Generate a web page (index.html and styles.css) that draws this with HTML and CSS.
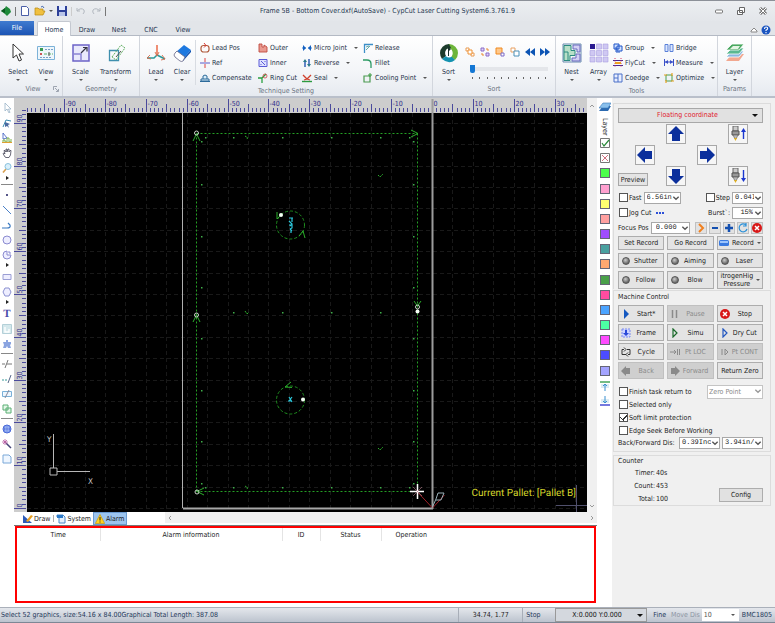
FILE: index.html
```html
<!DOCTYPE html>
<html lang="en">
<head>
<meta charset="utf-8">
<title>CypCut Laser Cutting System</title>
<link rel="stylesheet" href="styles.css">
</head>
<body>
<header class="titlebar">
  <div class="quick">
    <svg class="i12" viewBox="0 0 12 12"><path d="M1 6l4-3 1-2 4 3 1 3-4 4-2-2z" fill="#1f8a3b"/><path d="M1 6l4-3v5z" fill="#0c5a22"/></svg>
    <i class="vbar"></i>
    <button aria-label="New"><svg class="i12" viewBox="0 0 12 12"><path d="M2.500 1.500h5l2 2v7h-7z" fill="#fff" stroke="#4a5fa8"/></svg></button>
    <button aria-label="Open"><svg class="i12" viewBox="0 0 12 12"><path d="M1 10V3h3l1 1h4v2h2l-2 4z" fill="#f0c040" stroke="#b8860b" stroke-width=".7"/><path d="M7 2q2-2 3 1" fill="none" stroke="#46a"/></svg></button>
    <b class="dn"></b>
    <button aria-label="Save"><svg class="i12" viewBox="0 0 12 12"><path d="M1 1h10v10H1z" fill="#2c3f98"/><path d="M3 1h6v4H3z" fill="#e4ecff"/><path d="M3 7h6v4H3z" fill="#b8c4e8"/></svg></button>
    <i class="vbar pale"></i>
    <button aria-label="Undo"><svg class="i12" viewBox="0 0 12 12"><path d="M2 3v3h3M2 6q4-4 7-1 1 2-1 4" fill="none" stroke="#b3b8c0"/></svg></button>
    <button aria-label="Redo"><svg class="i12" viewBox="0 0 12 12"><path d="M10 3v3H7M10 6Q6 2 3 5q-1 2 1 4" fill="none" stroke="#b3b8c0"/></svg></button>
    <i class="vbar"></i>
  </div>
  <h1>Frame 5B - Bottom Cover.dxf(AutoSave) - CypCut Laser Cutting System6.3.761.9</h1>
  <div class="winbtns">
    <button aria-label="Minimize"><svg class="i12" viewBox="0 0 12 12"><rect x="2.500" y="5" width="7" height="3" rx="1" fill="#fff" stroke="#777"/></svg></button>
    <button aria-label="Restore"><svg class="i12" viewBox="0 0 12 12"><path d="M4.500 2.500h5v5h-5zM2.500 5.500h5v4h-5z" fill="#fff" stroke="#666"/></svg></button>
    <button aria-label="Close"><svg class="i12" viewBox="0 0 12 12"><path d="M3 3l6 6M9 3l-6 6" stroke="#777" stroke-width="3"/><path d="M3 3l6 6M9 3l-6 6" stroke="#fff"/></svg></button>
  </div>
</header>
<nav class="tabs">
  <button class="file">File</button>
  <button class="on">Home</button>
  <button>Draw</button>
  <button>Nest</button>
  <button>CNC</button>
  <button>View</button>
  <span class="grow"></span>
  <button class="mini" aria-label="Collapse ribbon"><svg class="i10" viewBox="0 0 10 10"><path d="M2 6l3-3 3 3v1H2z" fill="#fff" stroke="#888"/></svg></button>
  <button class="mini" aria-label="Help"><svg class="i10" viewBox="0 0 10 10"><circle cx="5" cy="5" r="4.500" fill="#1b55c0"/><path d="M3.500 4q0-2 1.500-2 1.700 0 1.700 1.300Q6.700 4.500 5 5.200V6M5 7v1.200" fill="none" stroke="#fff" stroke-width="1.100"/></svg></button>
</nav>

<section class="ribbon" aria-label="Home">
  <div class="grp g-view">
    <div class="body">
      <button class="big"><svg class="i20" viewBox="0 0 20 20"><path d="M5 1v14l3.500-3 2.500 6 2.500-1-2.500-6h4.500z" fill="#fff" stroke="#333"/></svg>Select<b class="dn"></b></button>
      <button class="big"><svg class="i20" viewBox="0 0 20 20"><path d="M1.500 3.500h17v13h-17z" fill="#eef6fb" stroke="#7cb2d8"/><path d="M4 5h3v3H4z" fill="#3a9a50"/><path d="M4 10h2v2H4z" fill="#c55"/><path d="M9 6.500h8M4 14.500h12" stroke="#7aa0c8" stroke-dasharray="2 1"/><path d="M8 11h9" stroke="#5ab06a" stroke-dasharray="3 1"/><path d="M13 9v4" stroke="#555"/></svg>View<b class="dn"></b></button>
    </div>
    <h2>View<svg class="corner" viewBox="0 0 6 6"><path d="M.5 4V.5H4M2 2l3 3M5.500 3v2.500H3" fill="none" stroke="#8a92a0" stroke-width=".8"/></svg></h2>
  </div>
  <div class="grp g-geo">
    <div class="body">
      <button class="big"><svg class="i20" viewBox="0 0 20 20"><path d="M2 2h16v16H2z" fill="#e9e9fb" stroke="#6c63c8" stroke-width="1.500"/><path d="M2 11h8v7" fill="none" stroke="#8b84d4" stroke-width="1.500"/><path d="M10 10l5-5M12 4.500h4v4" fill="none" stroke="#334" stroke-width="1.200"/></svg>Scale<b class="dn"></b></button>
      <button class="big"><svg class="i20" viewBox="0 0 20 20"><path d="M3.500 7.500h9v10h-9z" fill="none" stroke="#3f8fae" stroke-width="1.300"/><path d="M6 14l9-12 4 3-9 12z" fill="none" stroke="#5fae60" stroke-dasharray="2 1"/><path d="M10 14l5-6" stroke="#555"/></svg>Transform<b class="dn"></b></button>
    </div>
    <h2>Geometry</h2>
  </div>
  <div class="grp g-tech">
    <div class="body">
      <div class="leads">
      <button class="big"><svg class="i20" viewBox="0 0 20 20"><path d="M11 2v10" stroke="#e8542c" stroke-width="1.300"/><path d="M11 12l-3 3H1M11 12l8 4" fill="none" stroke="#2b9a9a" stroke-width="1.500"/><path d="M9 9l2 4 2-4M4 12l-3 3 4 1M16 12l3 4-4 1" fill="none" stroke="#d86a48" stroke-width=".9"/></svg>Lead<b class="dn"></b></button>
      <button class="big"><svg class="i20" viewBox="0 0 20 20"><path d="M12 2l7 5-8 9-8-6z" fill="#1d79e0"/><path d="M19 7v2l-8 9v-2z" fill="#0d50b0"/><path d="M5 8l8 6-2 4q-1 1-3 0l-5-4q-2-2 0-4z" fill="#fff" stroke="#668" stroke-width=".8"/></svg>Clear<b class="dn"></b></button>
      </div>
      <div class="cols c-tech">
        <button><svg class="i10" viewBox="0 0 10 10"><rect x="1" y="2.500" width="8" height="6.500" rx="2.500" fill="none" stroke="#b05a3c" stroke-width="1.200"/><path d="M4 0l2 2.500-2 2" fill="none" stroke="#d33"/></svg>Lead Pos</button>
        <button><svg class="i10" viewBox="0 0 10 10"><path d="M1 1h3v3h2V2l3 2v5H1z" fill="#e99a90" stroke="#c04a40" stroke-width=".9"/></svg>Outer</button>
        <button><svg class="i10" viewBox="0 0 10 10"><path d="M0 5h10" stroke="#2a7fd4" stroke-dasharray="4 2"/><path d="M1 2l3 3-3 3zM9 2L6 5l3 3z" fill="#1560c0"/></svg>Micro Joint<b class="dn far"></b></button>
        <button><svg class="i10" viewBox="0 0 10 10"><path d="M1.500 10V1.500H10" fill="none" stroke="#3c8fc8" stroke-width="1.300"/><path d="M3 7l4-4M3 4l3-1" stroke="#6aa" /></svg>Release</button>
        <button><svg class="i10" viewBox="0 0 10 10"><path d="M0 5h10" stroke="#5a5ac8"/><path d="M5 0v10" stroke="#d44" stroke-dasharray="4 2"/></svg>Ref</button>
        <button><svg class="i10" viewBox="0 0 10 10"><path d="M1 1.500h8v7H1z" fill="#dfe2ff" stroke="#5a5ad8"/><path d="M3 3l4 4M7 3v1M3 6v1" stroke="#5a5ad8"/></svg>Inner</button>
        <button><svg class="i10" viewBox="0 0 10 10"><path d="M3 9V3M7 1v6" stroke="#2456b0" stroke-width="1.400"/><path d="M1 4l2-3 2 3zM5 6l2 3 2-3z" fill="#2a7a8a"/></svg>Reverse<b class="dn far"></b></button>
        <button><svg class="i10" viewBox="0 0 10 10"><path d="M0 2h4q4 0 4 4v4" fill="none" stroke="#2c9a64" stroke-width="1.300"/></svg>Fillet</button>
        <button><svg class="i10" viewBox="0 0 10 10"><path d="M0 8.500h10M1 6h2V3q2-2 4 0v3h2v2H1zM3 6h4" fill="#d8ecf8" stroke="#2c6a9a"/></svg>Compensate</button>
        <button><svg class="i10" viewBox="0 0 10 10"><path d="M0 5h4v5M4 5l4-4" fill="none" stroke="#2aa040" stroke-width="1.300"/><circle cx="7" cy="3" r="2" fill="none" stroke="#c44" stroke-width=".8"/></svg>Ring Cut</button>
        <button><svg class="i10" viewBox="0 0 10 10"><path d="M0 8.500h10" stroke="#2a9a40" stroke-width="1.400"/><path d="M1 2l4 4 4-4M5 6l-3 1M5 6l3 1" fill="none" stroke="#d0402c" stroke-width="1.300"/></svg>Seal<b class="dn far"></b></button>
        <button><svg class="i10" viewBox="0 0 10 10"><path d="M1 3h6v6H1z" fill="none" stroke="#4a9a50" stroke-width="1.200"/><path d="M7 0v4M5 2h4" stroke="#3a9a40"/></svg>Cooling Point<b class="dn far"></b></button>
      </div>
    </div>
    <h2>Technique Setting</h2>
  </div>
  <div class="grp g-sort">
    <div class="body">
      <button class="big"><svg class="i20" viewBox="0 0 20 20"><path d="M10 1a9 9 0 0 1 9 9q0 4-3 7l-4-3q3-4 0-7l-2 2V1z" fill="#6db53a"/><path d="M10 1A9 9 0 0 0 1 10q0 3 2 6l4-3q-2-4 1-7l4-1z" fill="#1c3c2c"/><path d="M3 16q7 6 13 1l-4-4q-2 2-5 0z" fill="#1492b0"/><ellipse cx="10" cy="10" rx="3.500" ry="4.500" fill="#fff"/><path d="M9 4l3 2-2 2v5H9z" fill="#16302a"/></svg>Sort<b class="dn"></b></button>
      <div class="sorter">
        <div class="sorticons">
          <button aria-label="Order 1"><svg class="i10" viewBox="0 0 10 10"><path d="M1 1h3v3H1zM6 6h3v3H6z" fill="#fff" stroke="#e89a50"/><path d="M3 3h4v4H3z" fill="#fff" stroke="#f09030"/></svg></button>
          <button aria-label="Order 2"><svg class="i10" viewBox="0 0 10 10"><path d="M1 1h3v3H1zM6 6h3v3H6z" fill="#ded4f8" stroke="#8a6ac8"/><path d="M6 2h2v2M4 8H2V6" fill="none" stroke="#e88a30"/></svg></button>
          <button aria-label="Order 3"><svg class="i10" viewBox="0 0 10 10"><path d="M1 1h6v6H1z" fill="#ffc88a" stroke="#f08a20"/><path d="M6 6h3v3H6z" fill="#fff" stroke="#7a6ac8"/></svg></button>
          <button aria-label="Order 4"><svg class="i10" viewBox="0 0 10 10"><path d="M1 1h4v4H1z" fill="#fff" stroke="#e8a060"/><path d="M4 4h5v5H4z" fill="#fff" stroke="#4a90b8"/></svg></button>
          <button aria-label="Previous"><svg class="i10" viewBox="0 0 10 10"><path d="M5 1v8L0 5zM10 1v8L5 5z" fill="#0c54b4"/></svg></button>
          <button aria-label="Next"><svg class="i10" viewBox="0 0 10 10"><path d="M0 1v8l5-4zM5 1v8l5-4z" fill="#0c54b4"/></svg></button>
        </div>
        <input type="range" min="0" max="10" value="0" aria-label="Sort position">
        <div class="ticks"><i></i><i></i><i></i><i></i><i></i><i></i><i></i><i></i><i></i><i></i><i></i></div>
      </div>
    </div>
    <h2>Sort</h2>
  </div>
  <div class="grp g-tools">
    <div class="body">
      <button class="big"><svg class="i20" viewBox="0 0 20 20"><path d="M1 1h18v18H1z" fill="#eef8f4" stroke="#6a8ab0"/><path d="M2 2.500h7v5h4v5H8v5H2z" fill="#b9e0c8" stroke="#2a8a80"/><path d="M2 9h4v8" fill="none" stroke="#2a8a80"/><path d="M11 2h7v7h-3V6h-4zM10 15h4v-4h4v7h-8z" fill="#d4d0f4" stroke="#6a6ac0"/></svg>Nest<b class="dn"></b></button>
      <button class="big"><svg class="i20" viewBox="0 0 20 20"><path d="M1 1h5v5H1z" fill="#2a1a90"/><path d="M7.500 1h5v5h-5zM14 1h5v5h-5zM1 7.500h5v5H1zM7.500 7.500h5v5h-5zM14 7.500h5v5h-5zM1 14h5v5H1zM7.500 14h5v5h-5zM14 14h5v5h-5z" fill="#cfc8f2" stroke="#aaa0e0" stroke-width=".6"/></svg>Array<b class="dn"></b></button>
      <div class="cols c-tools">
        <button><svg class="i10" viewBox="0 0 10 10"><path d="M1 1h5v5H1zM4 3h5v5H4z" fill="#cfe0ff" stroke="#1f54c8"/><path d="M3 4v5h4" fill="none" stroke="#1f54c8"/></svg>Group<b class="dn far"></b></button>
        <button><svg class="i10" viewBox="0 0 10 10"><path d="M1 1.500h3v7H1zM6 1.500h3v7H6z" fill="#dce8ff" stroke="#5a80d8"/></svg>Bridge</button>
        <button><svg class="i10" viewBox="0 0 10 10"><path d="M0 2.500h10M0 7.500h10" stroke="#4a2a90" stroke-width="1.200"/><path d="M2 0v10M8 0v10" stroke="#d03a6a" stroke-dasharray="1 1.500"/><path d="M2 5h6" stroke="#f0a020" stroke-width="2"/></svg>FlyCut<b class="dn far"></b></button>
        <button><svg class="i10" viewBox="0 0 10 10"><path d="M.5 1v7M9.500 1v7M1 4h8" stroke="#3a50c8"/><path d="M1 4l3-2v4zM9 4L6 2v4z" fill="#3a50c8"/></svg>Measure<b class="dn far"></b></button>
        <button><svg class="i10" viewBox="0 0 10 10"><path d="M1 1h8v8H1z" fill="#e8eeff" stroke="#4a70c8"/><path d="M5 1v8M1 5h4" stroke="#4a70c8"/></svg>Coedge<b class="dn far"></b></button>
        <button><svg class="i10" viewBox="0 0 10 10"><path d="M2 2h6v6H2z" fill="none" stroke="#4aa050"/><path d="M0 2h3M8 0v3M7 8h3M2 7v3" stroke="#e8a020" stroke-width="1.200"/></svg>Optimize<b class="dn far"></b></button>
      </div>
    </div>
    <h2>Tools</h2>
  </div>
  <div class="grp g-params">
    <div class="body">
      <button class="big"><svg class="i20" viewBox="0 0 20 20"><path d="M7 11h12l-5 7H1z" fill="#f2a890"/><path d="M7 8h12l-5 6H1z" fill="#8ab8e0" stroke="#fff" stroke-width=".8"/><path d="M7 5h12l-5 6H1z" fill="#5ab890" stroke="#fff" stroke-width=".8"/><path d="M7 1h12l-5 6H1z" fill="#4aa860" stroke="#fff" stroke-width=".8"/><path d="M8 3h7l-2 3H5z" fill="#e4f4e4"/></svg>Layer<b class="dn"></b></button>
    </div>
    <h2>Params</h2>
  </div>
</section>

<main class="work">
  <div class="tools" role="toolbar" aria-label="Drawing tools">
    <button aria-label="Select"><svg class="i10" viewBox="0 0 10 10"><path d="M3 0v8l2-2 2 4 1-.5L6.500 6H9z" fill="#fff" stroke="#9ab4c8" stroke-width=".8"/></svg></button>
    <button aria-label="Edit nodes"><svg class="i10" viewBox="0 0 10 10"><path d="M1 9l3-7 5 1" fill="none" stroke="#3a8ab0"/><path d="M3 4l5 2-2 1 1 3-2-2-2 1z" fill="#4a6aa0"/></svg></button>
    <button aria-label="Scale nodes"><svg class="i10" viewBox="0 0 10 10"><path d="M1 0v6l4-1z" fill="#fff" stroke="#3a5ac0" stroke-width=".8"/><path d="M1 9V7h2v2h2V5h2v4h2V6" fill="none" stroke="#7ab04a"/><path d="M0 9.500h10" stroke="#e0a030"/></svg></button>
    <button aria-label="Pan"><svg class="i10" viewBox="0 0 10 10"><path d="M3 9L1 5.500 2 5l1 1L2 2.500h1L4 4V1h1v3l1-3h1v3l1-1.500h1L8.500 7 7 9.500H4z" fill="#fff" stroke="#445" stroke-width=".8"/></svg></button>
    <button aria-label="Zoom"><svg class="i10" viewBox="0 0 10 10"><path d="M4 6L1 9.500" stroke="#d8a050" stroke-width="1.600"/><circle cx="6" cy="3.500" r="3" fill="#d8f0fc" stroke="#8ac0dc"/></svg></button>
    <span class="more"></span>
    <hr>
    <button aria-label="Point"><svg class="i10" viewBox="0 0 10 10"><path d="M4 4h2v2H4z" fill="#558"/></svg></button>
    <button aria-label="Line"><svg class="i10" viewBox="0 0 10 10"><path d="M1 1l8 8" stroke="#4a80c8"/></svg></button>
    <button aria-label="Polyline"><svg class="i10" viewBox="0 0 10 10"><path d="M0 8h5q4 0 3-3L6 3" fill="none" stroke="#3a78c0" stroke-width="1.200"/></svg></button>
    <button aria-label="Circle"><svg class="i10" viewBox="0 0 10 10"><circle cx="5" cy="5" r="4" fill="#eef" stroke="#8a8ad0"/></svg></button>
    <button aria-label="Arc"><svg class="i10" viewBox="0 0 10 10"><path d="M5 5V1a4 4 0 1 0 4 4zM7 1v2h2" fill="#eef" stroke="#8a8ad0"/></svg></button>
    <span class="more"></span>
    <button aria-label="Rectangle"><svg class="i10" viewBox="0 0 10 10"><path d="M1 2.500h8v5H1z" fill="#eef" stroke="#9a9ed4"/></svg></button>
    <button aria-label="Polygon"><svg class="i10" viewBox="0 0 10 10"><path d="M3 1h4l2 4-2 4H3L1 5z" fill="#eef" stroke="#8a90d0"/></svg></button>
    <span class="more"></span>
    <button class="t">T</button>
    <button aria-label="Image"><svg class="i10" viewBox="0 0 10 10"><path d="M.5.5h9v9h-9z" fill="#d4e8ec" stroke="#b4d0d8"/><path d="M3 3v5h4V5" fill="none" stroke="#fff" stroke-width="1.400"/></svg></button>
    <button aria-label="Parts"><svg class="i10" viewBox="0 0 10 10"><path d="M4 1h2v2l3 0v2L8 6l1 3H6L5 7 4 9H1l1-3-1-3h3z" fill="#8aa4e0"/></svg></button>
    <hr>
    <button aria-label="Break"><svg class="i10" viewBox="0 0 10 10"><path d="M0 5h3M5 5h5M3 9l3-8" stroke="#777"/></svg></button>
    <button aria-label="Extend"><svg class="i10" viewBox="0 0 10 10"><path d="M0 6h6" stroke="#3a9a9a" stroke-dasharray="2 1"/><path d="M6 9l3-8" stroke="#568"/></svg></button>
    <button aria-label="Trim"><svg class="i10" viewBox="0 0 10 10"><path d="M.5 2.500h9v5h-9z" fill="#eef6ff" stroke="#7ab0d8"/><path d="M3 9l4-8" stroke="#889"/></svg></button>
    <button aria-label="Combine"><svg class="i10" viewBox="0 0 10 10"><path d="M1 1h5v5H1zM4 4h5v5H4z" fill="#e4f8e8" stroke="#5aae74"/></svg></button>
    <hr>
    <button aria-label="Sphere"><svg class="i10" viewBox="0 0 10 10"><circle cx="5" cy="5" r="4" fill="#a8c0f8" stroke="#4a6ad8"/><path d="M1 5h8M5 1v8M3 2q-1 3 0 6M7 2q1 3 0 6" fill="none" stroke="#4a6ad8" stroke-width=".7"/></svg></button>
    <button aria-label="Magic"><svg class="i10" viewBox="0 0 10 10"><path d="M4 4l5 5" stroke="#447" stroke-width="1.500"/><path d="M3 0v6M0 3h6M1 1l4 4M5 1L1 5" stroke="#b04a9a" stroke-width=".7"/></svg></button>
    <button aria-label="Sheet"><svg class="i10" viewBox="0 0 10 10"><path d="M1 1h6l2 2v6H1z" fill="#eef6ff" stroke="#7aa8d8"/></svg></button>
  </div>

  <div class="center">
    <div class="stage">
      <div class="canvas">
        <svg class="drawing" role="img" aria-label="Nested part drawing">
          <g id="scene" transform="translate(-14 -98)"></g>
          <g transform="translate(-14 -98)" fill="none">
            <path d="M182.500 113v395" stroke="#b0b0b0"/>
            <path d="M183 508.500h250" stroke="#a8a8a8" stroke-width="2"/>
            <path d="M432.500 99v410" stroke="#9c9c9c" stroke-width="2"/>
            <path d="M196.500 133.500V491.500" class="cut"/><path d="M196.500 133.500H417.500" class="cut"/><path d="M417.500 133.500V491.500" class="cut"/><path d="M196.500 491.500H417.500" class="cut"/>
            <circle cx="290.500" cy="225" r="14" class="round"/><circle cx="290.500" cy="400" r="14" class="round"/>
            <g stroke="#2cae2c"><path d="M193 141l3.500-7 3.500 7M193 322l3.500-7 3.500 7M411 130l7 3.500-7 3.500M204 488l-7 3.500 7 3.500M414 301l3.500 5 3.500-5M299 236l4-5 2 7M277 212v7l4-4M291 382l-6 5 7 .5"/>
            <path d="M245 136l3 2-2 1M245 311l2 3 2-2M245 486l3 2-2 1M378 175l2 2 3-3M378 448l2 2 3-3" stroke-dasharray="2 1"/></g>
            <g stroke="#c8d8c8"><circle cx="196.500" cy="133" r="2"/><circle cx="196.500" cy="315" r="2"/><circle cx="197" cy="492" r="2"/><circle cx="417.500" cy="307" r="2"/></g>
            <g fill="#f4fff4"><circle cx="281" cy="215" r="2"/><circle cx="303" cy="399.500" r="2"/><circle cx="417.500" cy="311.500" r="2"/></g>
            <path d="M289 218h4M292 218v4M289 221l3 3-2 2M289 225h3v3l-2 1M291 230v3M290 229l2 2M289 397l3 5M292 397l-3 4M288 401h4" stroke="#2cc8dc" stroke-width="1.200"/>
            <path d="M417.500 492l15 16 12-13" stroke="#a02028"/>
            <path d="M432 508l4-9M436 499l2-6h6l-3 7h-5" stroke="#9ab0b8"/>
            <path d="M410 491.500h14M417.500 484v15" stroke="#fff" stroke-width="1.500"/>
            <path d="M413 487l9 9M422 487l-9 9" stroke="#c08090" stroke-width=".6"/>
            <path d="M53.500 434v34M57 471.500h33M50 468h7v7h-7z" stroke="#b8b8b8"/>
            <path d="M576.500 485v27M556 505.500h31" stroke="#50506c"/>
            <g fill="#c8c8c8" class="axis"><text x="47" y="442">Y</text><text x="88" y="484">X</text></g>
          </g>
        </svg>
        <p class="pallet">Current Pallet: [Pallet B]</p>
      </div>
      <div class="vscroll"><svg class="i6" viewBox="0 0 6 6"><path d="M1 4l2-2 2 2" fill="none" stroke="#999"/></svg><svg class="i6" viewBox="0 0 6 6"><path d="M1 2l2 2 2-2" fill="none" stroke="#999"/></svg></div>
    </div>
    <div class="dock">
      <button><svg class="i10" viewBox="0 0 10 10"><path d="M0 1v8h9z" fill="#2c5ab8"/><path d="M3 7l5-6 2 1-5 6z" fill="#e8a020"/></svg>Draw</button><i></i>
      <button><svg class="i10" viewBox="0 0 10 10"><path d="M1 1h6l2 2v6H3V3H1z" fill="#e4f0fc" stroke="#4a88c8"/><path d="M1 1h6v3H1z" fill="#2c7ac8"/></svg>System</button>
      <button class="on"><svg class="i10" viewBox="0 0 10 10"><path d="M5 .5L9.700 9.500H.3z" fill="#ffd21c" stroke="#c89a10" stroke-width=".7"/><path d="M5 3v3.500M5 7.500v1" stroke="#222"/></svg>Alarm</button>
      <div class="hscroll"><svg class="i6" viewBox="0 0 6 6"><path d="M4 1L2 3l2 2" fill="none" stroke="#999"/></svg><svg class="i6" viewBox="0 0 6 6"><path d="M2 1l2 2-2 2" fill="none" stroke="#999"/></svg></div>
    </div>
    <div class="alarms">
      <table>
        <thead><tr><th class="w1">Time</th><th class="w2">Alarm information</th><th class="w3">ID</th><th class="w4">Status</th><th class="w5">Operation</th><th></th></tr></thead>
      </table>
    </div>
  </div>

  <aside class="layers" aria-label="Layers">
    <svg class="i12" viewBox="0 0 12 12"><path d="M4 5h8l-3 5H0z" fill="#2c6ab0"/><path d="M4 2h8L9 7H0z" fill="#8ac0ec" stroke="#3a7ab8" stroke-width=".6"/></svg>
    <span class="vtext">Layer</span>
    <div class="swatches">
      <svg class="i10" viewBox="0 0 10 10"><path d="M.5.5h9v9h-9z" fill="#fff" stroke="#777"/><path d="M2 5l2 3 5-6" fill="none" stroke="#2a8a3a" stroke-width="1.200"/></svg>
      <svg class="i10" viewBox="0 0 10 10"><path d="M.5.5h9v9h-9z" fill="#fff" stroke="#777"/><path d="M2 2l6 6M8 2L2 8" stroke="#d07080"/></svg>
      <button class="s1" aria-label="Layer 1"></button><button class="s2" aria-label="Layer 2"></button><button class="s3" aria-label="Layer 3"></button><button class="s4" aria-label="Layer 4"></button><button class="s5" aria-label="Layer 5"></button><button class="s6" aria-label="Layer 6"></button><button class="s7" aria-label="Layer 7"></button><button class="s8" aria-label="Layer 8"></button><button class="s9" aria-label="Layer 9"></button><button class="s10" aria-label="Layer 10"></button><button class="s11" aria-label="Layer 11"></button><button class="s12" aria-label="Layer 12"></button><button class="s13" aria-label="Layer 13"></button><button class="s14" aria-label="Layer 14"></button>
      <svg class="i10" viewBox="0 0 10 10"><path d="M0 1h10" stroke="#3aa050" stroke-width="1.400"/><path d="M1 4h8M1 6h8" stroke="#b8d8e8"/><path d="M5 10V3M3 5l2-2 2 2" fill="none" stroke="#3a90d0"/></svg>
      <svg class="i10" viewBox="0 0 10 10"><path d="M0 9h10" stroke="#3a40d0" stroke-width="1.400"/><path d="M1 4h8M1 6h8" stroke="#b8d8e8"/><path d="M5 0v7M3 5l2 2 2-2" fill="none" stroke="#3a90d0"/></svg>
    </div>
  </aside>

  <aside class="panel" aria-label="Machine">
    <div class="box first">
      <div class="pick coord"><select aria-label="Coordinate"><option>Floating coordinate</option></select><b class="dn"></b></div>
      <div class="pad">
        <button class="up" aria-label="Up"><svg class="i16" viewBox="0 0 16 16"><path d="M8 0l8 8h-4v7H4V8H0z" fill="#0b2f9c"/></svg></button>
        <button class="nozup" aria-label="Nozzle up"><svg class="i16" viewBox="0 0 16 16"><path d="M3 0h5v5H3z" fill="#ccc" stroke="#666"/><path d="M2 5h7v4H2z" fill="#999" stroke="#555"/><path d="M3 9h5l-2 4H5z" fill="#bbb" stroke="#666" stroke-width=".7"/><path d="M4 12h3l-1.500 3z" fill="#e0b020"/><path d="M13.500 13V4" stroke="#1c38d0" stroke-width="1.400"/><path d="M11 6l2.500-4L16 6z" fill="#1c38d0"/></svg></button>
        <button class="left" aria-label="Left"><svg class="i16" viewBox="0 0 16 16"><path d="M0 8l8-8v4h7v8H8v4z" fill="#0b2f9c"/></svg></button>
        <button class="right" aria-label="Right"><svg class="i16" viewBox="0 0 16 16"><path d="M16 8L8 0v4H1v8h7v4z" fill="#0b2f9c"/></svg></button>
        <button class="preview">Preview</button>
        <button class="down" aria-label="Down"><svg class="i16" viewBox="0 0 16 16"><path d="M8 16l8-8h-4V1H4v7H0z" fill="#0b2f9c"/></svg></button>
        <button class="nozdn" aria-label="Nozzle down"><svg class="i16" viewBox="0 0 16 16"><path d="M3 0h5v5H3z" fill="#ccc" stroke="#666"/><path d="M2 5h7v4H2z" fill="#999" stroke="#555"/><path d="M3 9h5l-2 4H5z" fill="#bbb" stroke="#666" stroke-width=".7"/><path d="M4 12h3l-1.500 3z" fill="#e0b020"/><path d="M13.500 2v9" stroke="#1c38d0" stroke-width="1.400"/><path d="M11 10l2.500 4L16 10z" fill="#1c38d0"/></svg></button>
      </div>
      <div class="row">
        <label><input type="checkbox">Fast</label>
        <div class="pick w-fast"><select aria-label="Fast speed"><option>6.56in/</option></select><svg class="i6" viewBox="0 0 6 6"><path d="M1 2l2 2 2-2" fill="none" stroke="#555"/></svg></div>
        <span class="grow"></span>
        <label><input type="checkbox">Step</label>
        <div class="pick w-step"><select aria-label="Step length"><option>0.04I:</option></select><svg class="i6" viewBox="0 0 6 6"><path d="M1 2l2 2 2-2" fill="none" stroke="#555"/></svg></div>
      </div>
      <div class="row">
        <label><input type="checkbox">Jog Cut</label><button class="dots" aria-label="Jog cut settings"><svg class="i10" viewBox="0 0 10 10"><path d="M1 4h2v2H1zM4 4h2v2H4zM7 4h2v2H7z" fill="#2c50d8"/></svg></button>
        <span class="grow"></span>
        <label for="burst">Burst`:</label>
        <div class="pick w-burst"><select id="burst"><option>15%</option></select><svg class="i6" viewBox="0 0 6 6"><path d="M1 2l2 2 2-2" fill="none" stroke="#555"/></svg></div>
      </div>
      <div class="row focus">
        <label for="focus">Focus Pos</label>
        <div class="pick w-focus"><select id="focus"><option>0.000</option></select><svg class="i6" viewBox="0 0 6 6"><path d="M1 2l2 2 2-2" fill="none" stroke="#555"/></svg></div>
        <span class="grow"></span>
        <button class="sq" aria-label="Go"><svg class="i10" viewBox="0 0 10 10"><path d="M3 1l4 4-4 4" fill="none" stroke="#f08020" stroke-width="2"/></svg></button>
        <button class="sq" aria-label="Decrease"><svg class="i10" viewBox="0 0 10 10"><path d="M2 5h6" stroke="#1450b0" stroke-width="2"/></svg></button>
        <button class="sq" aria-label="Increase"><svg class="i10" viewBox="0 0 10 10"><path d="M1 5h8M5 1v8" stroke="#1450b0" stroke-width="2.500"/></svg></button>
        <button class="sq" aria-label="Refresh"><svg class="i10" viewBox="0 0 10 10"><path d="M8 2a4 4 0 1 0 1 4M8 0v3H5" fill="none" stroke="#2a90d8" stroke-width="1.200"/></svg></button>
        <button class="sq" aria-label="Cancel"><svg class="i10" viewBox="0 0 10 10"><circle cx="5" cy="5" r="5" fill="#d81818"/><path d="M3 3l4 4M7 3L3 7" stroke="#fff" stroke-width="1.500"/></svg></button>
      </div>
      <div class="btns b1">
        <button>Set Record</button><button>Go Record</button><button class="rec"><svg class="i10" viewBox="0 0 10 10"><rect y="2" width="10" height="6" rx="1.500" fill="#3a7ae0"/><path d="M1 3h8v2H1z" fill="#9cc4fc"/></svg>Record<b class="dn"></b></button>
        <button><i class="led"></i><span>Shutter</span></button><button><i class="led"></i><span>Aiming</span></button><button><i class="led"></i><span>Laser</span></button>
        <button><i class="led"></i><span>Follow</span></button><button><i class="led"></i><span>Blow</span></button><button class="gas"><span>itrogenHig<br>Pressure</span><b class="dn"></b></button>
      </div>
    </div>
    <div class="box">
      <h3>Machine Control</h3>
      <div class="btns b2">
        <button><svg class="i10" viewBox="0 0 10 10"><path d="M3 0l5 5-5 5z" fill="#1458c0"/></svg><span>Start*</span></button>
        <button disabled><svg class="i10" viewBox="0 0 10 10"><path d="M2.500 1v8M6.500 1v8" stroke="#8a8a8a" stroke-width="1.500"/></svg><span>Pause</span></button>
        <button><svg class="i10" viewBox="0 0 10 10"><circle cx="5" cy="5" r="5" fill="#d81818"/><path d="M3 3l4 4M7 3L3 7" stroke="#fff" stroke-width="1.500"/></svg><span>Stop</span></button>
        <button><svg class="i10" viewBox="0 0 10 10"><path d="M1 1h8v8H1z" fill="#cdd4ff" stroke="#7a8af0" stroke-dasharray="2 1"/><path d="M4 2v3H2l3 3 3-3H6V2z" fill="#2a48d8"/></svg><span>Frame</span></button>
        <button><svg class="i10" viewBox="0 0 10 10"><path d="M3 1l4 4-4 4z" fill="none" stroke="#1a6a2a" stroke-width="1.200"/></svg><span>Simu</span></button>
        <button><svg class="i10" viewBox="0 0 10 10"><path d="M3 1l4 4-4 4z" fill="none" stroke="#2458c0" stroke-width="1.200"/></svg><span>Dry Cut</span></button>
        <button><svg class="i10" viewBox="0 0 10 10"><path d="M3 2.500H1v5h4M6 2.500h3v5H7M3 .5l2 2-2 2M7 5.500l-2 2 2 2" fill="none" stroke="#333"/></svg><span>Cycle</span></button>
        <button disabled><svg class="i10" viewBox="0 0 10 10"><path d="M0 5h5M4 3l2 2-2 2M7.500 2v6M9.500 2v6" fill="none" stroke="#8a8a8a"/></svg><span>Pt LOC</span></button>
        <button disabled><svg class="i10" viewBox="0 0 10 10"><path d="M2 2v6M5 2l3 3-3 3z" fill="none" stroke="#8a8a8a"/></svg><span>Pt CONT</span></button>
        <button disabled><svg class="i10" viewBox="0 0 10 10"><path d="M0 5l5-5v2h4v6H5v2z" fill="#8a8a8a"/></svg><span>Back</span></button>
        <button disabled><svg class="i10" viewBox="0 0 10 10"><path d="M10 5L5 0v2H1v6h4v2z" fill="#8a8a8a"/></svg><span>Forward</span></button>
        <button class="rz">Return Zero</button>
      </div>
      <div class="opts">
        <label><input type="checkbox">Finish task return to</label>
        <div class="pick zero"><select aria-label="Return point" disabled><option>Zero Point</option></select><svg class="i6" viewBox="0 0 6 6"><path d="M1 2l2 2 2-2" fill="none" stroke="#999"/></svg></div>
        <label><input type="checkbox">Selected only</label>
        <label class="full"><input type="checkbox" checked>Soft limit protection</label>
        <label class="full"><input type="checkbox">Edge Seek Before Working</label>
      </div>
      <div class="row dis">
        <label for="back">Back/Forward Dis:</label><span class="grow"></span>
        <div class="pick w-dis"><select id="back"><option>0.39Inch</option></select><svg class="i6" viewBox="0 0 6 6"><path d="M1 2l2 2 2-2" fill="none" stroke="#555"/></svg></div>
        <div class="pick w-dis"><select aria-label="Back speed"><option>3.94in/s</option></select><svg class="i6" viewBox="0 0 6 6"><path d="M1 2l2 2 2-2" fill="none" stroke="#555"/></svg></div>
      </div>
    </div>
    <div class="box counter">
      <h3>Counter</h3>
      <dl><dt>Timer:</dt><dd>40s</dd><dt>Count:</dt><dd>453</dd><dt>Total:</dt><dd>100</dd></dl>
      <button class="config">Config</button>
    </div>
  </aside>
</main>

<footer class="status">
  <span class="msg">Select 52 graphics, size:54.16 x 84.00Graphical Total Length: 387.08</span>
  <span class="pos">34.74, 1.77</span>
  <span class="state">Stop</span>
  <button class="xy">X:0.000 Y:0.000<b class="dn"></b></button>
  <span class="fine">Fine</span>
  <label class="dim" for="move">Move Dis</label>
  <div class="pick move"><select id="move"><option>10</option></select><b class="dn"></b></div>
  <span class="model">BMC1805</span>
</footer>
<script src="scene.js"></script>
</body>
</html>
```
FILE: styles.css
```css
* { box-sizing: border-box; }
body {
  margin: 0;
  height: 100vh;
  display: flex;
  flex-direction: column;
  overflow: hidden;
  background: #fff;
  color: #1c1c1c;
  font: 7px/10px "DejaVu Sans Condensed", "Open Sans", sans-serif;
  text-rendering: geometricPrecision;
}
button, select, input { font: inherit; color: inherit; margin: 0; padding: 0; text-rendering: inherit; }
button { border: 0; background: none; white-space: nowrap; }
svg { display: block; flex: none; }
h1, h2, h3, p, dl, dd { margin: 0; font-size: 7px; font-weight: 400; }
.i6 { width: 6px; height: 6px; }
.i10 { width: 10px; height: 10px; }
.i12 { width: 12px; height: 12px; }
.i16 { width: 16px; height: 16px; }
.i20 { width: 20px; height: 20px; }
.grow { flex: 1; }
.dn {
  width: 0;
  height: 0;
  flex: none;
  border: 2px solid transparent;
  border-top-color: #555;
  border-bottom: 0;
}

/* title bar and tabs */
.titlebar {
  display: grid;
  grid-template-columns: 1fr auto 1fr;
  align-items: center;
  height: 21px;
  border-top: 1px solid #8c9098;
  background: linear-gradient(#eceef1, #e3e6ea);
  color: #24364f;
}
.quick { display: flex; align-items: center; gap: 3px; }
.quick .vbar { width: 1px; height: 9px; background: #777; }
.quick .vbar.pale { background: #ccc; }
.winbtns { display: flex; justify-content: flex-end; gap: 10px; padding-right: 6px; }
.tabs {
  display: flex;
  height: 15px;
  background: #e2e5e9;
  border-bottom: 1px solid #b4bac4;
  color: #24344e;
  padding-right: 2px;
}
.tabs button { width: 32px; padding-top: 3px; }
.tabs .file { width: 34px; margin-right: 3px; background: linear-gradient(#3f7bd0, #1c55b4); color: #fff; padding: 0; }
.tabs .on { width: 34px; background: #fff; border: 1px solid #c4c8d0; border-bottom: 0; border-radius: 2px 2px 0 0; margin-bottom: -1px; padding-top: 2px; }
.tabs .mini { width: 12px; }

/* ribbon */
.ribbon {
  display: flex;
  height: 62px;
  background: linear-gradient(#fff, #f3f5f8 60%, #e6eaf0);
  border-bottom: 2px solid #b9bfca;
  color: #26334a;
}
.grp { display: flex; flex-direction: column; border-right: 1px solid #d2d6dd; }
.grp .body { display: flex; flex: 1; padding-top: 4px; }
.grp h2 { display: flex; justify-content: center; align-items: center; height: 14px; color: #6b7482; position: relative; }
.corner { position: absolute; right: 3px; top: 4px; width: 6px; height: 6px; }
.g-view { width: 63px; padding-left: 4px; }
.g-geo { width: 77px; }
.g-tech { width: 293px; }
.g-sort { width: 123px; }
.g-tools { width: 162px; }
.g-params { width: 34px; }
.big { width: 28px; display: flex; flex-direction: column; align-items: center; }
.big .dn { margin-top: 2px; }
.big .i20 { margin: 3px 0 4px; }
.g-geo .big { width: 35px; }
.g-params .big { width: 34px; }
.g-sort .big { width: 31px; }
.leads { display: flex; width: 57px; padding-left: 3px; border-right: 1px solid #d8dce2; margin: 0 4px 0 0; }
.leads .big { width: 26px; }
.cols { display: grid; grid-auto-rows: 15px; }
.cols button { display: flex; align-items: center; gap: 2px; text-align: left; }
.cols .far { margin-left: 5px; }
.c-tech { grid-template-columns: 58px 44px 61px 69px; }
.c-tools { grid-template-columns: 51px 52px; margin-left: 1px; }
.g-tools .big { width: 27px; }
.g-tools .body { padding-left: 2px; }
.sorter { width: 86px; }
.sorticons { display: flex; gap: 5px; padding: 7px 0 8px 1px; }
.sorter input { display: block; appearance: none; width: 78px; height: 8px; margin-left: 6px; background: linear-gradient(#e4e6ea, #e4e6ea) 0 50% / 100% 4px no-repeat; border: 0; }
.sorter input::-webkit-slider-thumb { appearance: none; width: 5px; height: 8px; background: #1477d4; border-radius: 0 0 2px 2px; }
.ticks { display: flex; justify-content: space-between; width: 78px; margin-left: 6px; padding: 4px 2px 0; }
.ticks i { width: 1px; height: 2px; background: #666; }

/* work area */
.work { flex: 1; display: flex; min-height: 0; }
.tools { width: 14px; display: flex; flex-direction: column; padding-top: 2px; }
.tools button { height: 15px; display: flex; align-items: center; justify-content: center; }
.tools .t { font: 700 11px "Liberation Serif", serif; color: #4a4aa8; }
.tools hr { width: 12px; margin: 2px 1px; border: 0; border-top: 1px solid #888; }
.more { align-self: center; border: 2px solid transparent; border-left: 3px solid #222; border-right: 0; height: 4px; margin: 1px 0 2px; }
.center { flex: 1; min-width: 0; display: flex; flex-direction: column; }
.stage { flex: 1; display: flex; min-height: 0; }
.canvas { flex: 1; position: relative; background: #000; overflow: hidden; }
.drawing { position: absolute; width: 100%; height: 100%; }
.ruler { fill: #cdcdcd; }
.tick { stroke: #4a4a9c; fill: none; }
.num { fill: #2f2f8c; font-size: 7px; }
.grid { stroke: #191919; stroke-dasharray: 4 3; fill: none; }
.cut { stroke: #24a024; stroke-dasharray: 2 2; }
.round { stroke: #1f8f1f; stroke-dasharray: 3 2; }
.spot { fill: #3fae4a; }
.axis { font-size: 8px; }
.pallet { position: absolute; right: 11px; bottom: 12px; color: #d6d62c; font: 10px/12px Roboto, sans-serif; }
.vscroll { width: 10px; background: #f0f0f0; display: flex; flex-direction: column; justify-content: space-between; align-items: center; padding: 5px 0 3px; }
.dock { display: flex; align-items: stretch; height: 14px; padding-left: 8px; border-bottom: 1px solid #777; }
.dock button { display: flex; align-items: center; gap: 1px; padding: 0 2px 0 1px; }
.dock button.on { background: #9cc4ee; border: 1px solid #6a9ad0; }
.dock > i { width: 1px; margin: 3px 1px; background: #aaa; }
.hscroll { flex: 1; margin-left: 38px; background: #f0f0f0; display: flex; justify-content: space-between; align-items: center; padding: 0 2px; margin-bottom: 2px; }
.alarms { height: 77px; margin: 0 1px 4px; border: 2px solid #f00; }
.alarms table { width: 100%; border-collapse: collapse; table-layout: fixed; }
.alarms th { font-weight: 400; height: 13px; padding: 0; border-right: 1px solid #e4e4e4; }
.alarms th:last-child { border: 0; }
.w1 { width: 83px; }
.w2 { width: 182px; }
.w3 { width: 38px; }
.w4 { width: 61px; }
.w5 { width: 60px; }
.alarms .w5 { border: 0; }

/* layer bar */
.layers { width: 15px; background: #fff; display: flex; flex-direction: column; align-items: center; padding-top: 3px; }
.vtext { writing-mode: vertical-rl; height: 23px; margin-top: 2px; font-size: 7px; text-align: center; }
.swatches { display: flex; flex-direction: column; justify-content: space-between; height: 268px; }
.swatches button { width: 10px; height: 10px; border: 1px solid #667; }
.s1 { background: #4cff4c; }
.s2 { background: #ffa0d0; }
.s3 { background: #ffff70; }
.s4 { background: #ffa0a0; }
.s5 { background: #a04cff; }
.s6 { background: #4aa0a0; }
.s7 { background: #ffa870; }
.s8 { background: #4aa04a; }
.s9 { background: #ff4ca0; }
.s10 { background: #4ca4ff; }
.s11 { background: #4cffa4; }
.s12 { background: #ff4cff; }
.s13 { background: #4c4cff; }
.s14 { background: #a4a4ff; }

/* machine panel */
.panel { width: 163px; background: #f0f0f0; padding: 5px 4px 0 1px; }
.box { border: 1px solid #dcdcdc; padding: 0 7px 0 4px; }
.first { padding-top: 4px; border-bottom: 0; }
.pick { position: relative; border: 1px solid #a8a8a8; background: #fff; height: 12px; }
.pick select { display: block; appearance: none; width: 100%; height: 100%; border: 0; background: none; padding: 0 0 0 2px; font: 7px/10px "Liberation Mono", monospace; color: #222; opacity: 1; overflow: hidden; }
.pick > svg { position: absolute; right: 0; top: 1px; width: 8px; height: 8px; background: #fff; }
.pick > .dn { position: absolute; right: 4px; top: 5px; }
.coord { height: 15px; background: #e1e1e1; }
.coord select { font: inherit; line-height: 13px; color: #e0202c; text-align-last: center; padding-right: 8px; }
.coord > .dn, .xy .dn { border-width: 3px; border-bottom: 0; border-top-color: #111; }
.pad { display: grid; grid-template: repeat(3, 20px) / 37px 20px 20px 20px; gap: 1px 11px; margin: 1px 0 4px; }
.pad button { border: 1px solid #a8a8a8; background: #f6f6f6; display: grid; place-items: center; }
.pad .up { grid-area: 1 / 2; }
.pad .nozup { grid-area: 1 / 4; }
.pad .left { grid-area: 2 / 1; width: 20px; justify-self: end; }
.pad .right { grid-area: 2 / 3; }
.pad .preview { grid-area: 3 / 1; width: 30px; height: 13px; align-self: end; background: #e4e4e4; }
.pad .down { grid-area: 3 / 2; }
.pad .nozdn { grid-area: 3 / 4; }
.row { display: flex; align-items: center; height: 15px; gap: 2px; }
label { display: flex; align-items: center; gap: 1px; white-space: nowrap; }
input[type="checkbox"] { appearance: none; width: 9px; height: 9px; border: 1px solid #555; background: #fff; margin-left: 1px; }
input[type="checkbox"]:checked { background: linear-gradient(-45deg, transparent 42%, #333 42% 58%, transparent 58%) 3px 0 / 4px 7px no-repeat, linear-gradient(45deg, transparent 40%, #333 40% 60%, transparent 60%) 0 3px / 4px 4px no-repeat, #fff; }
.w-fast { width: 37px; }
.w-step, .w-burst { width: 31px; }
.w-burst select { text-align-last: right; padding-right: 9px; }
.w-focus { width: 39px; }
.w-focus select { padding-left: 4px; }
.w-dis { width: 41px; }
.dots { padding-left: 1px; }
.sq { width: 12px; height: 12px; background: #e2e2e2; border: 1px solid #c0c0c0; display: grid; place-items: center; }
.btns { display: grid; grid-template-columns: repeat(3, 1fr); gap: 3px; }
.btns button { display: flex; align-items: center; justify-content: center; border: 1px solid #adadad; background: #e4e4e4; min-width: 0; overflow: hidden; }
.btns span { flex: 1; text-align: center; }
.b1 { grid-template-rows: 14px 15px 18px; margin: 1px 0; }
.b1 button { padding: 0 2px; }
.b1 .rec { gap: 3px; }
.b2 { grid-auto-rows: 17px; row-gap: 2px; }
.b2 button { justify-content: flex-start; padding: 0 2px; }
.b2 .rz { justify-content: center; }
.btns button:disabled { background: #cfcfcf; border-color: #c0c0c0; color: #8a8a8a; }
.led { width: 8px; height: 8px; flex: none; border-radius: 50%; background: radial-gradient(circle at 40% 35%, #ccc, #666 70%); border: 1px solid #555; margin-left: 1px; }
.b1 .gas { line-height: 8px; padding: 0 2px 0 0; }
.box h3 { line-height: 10px; padding: 1px 0 3px; }
.opts { display: grid; grid-template-columns: 1fr 56px; grid-auto-rows: 13px; padding-top: 6px; }
.opts label { grid-column: 1; }
.opts .full { grid-column: 1 / 3; }
.zero { grid-area: 1 / 2; height: 14px; border-color: #c4c4c4; }
.zero select { font: inherit; line-height: 12px; color: #8a8a8a; padding-left: 1px; }
.row.dis { height: 12px; margin-bottom: 2px; }
.counter { margin-top: 3px; display: grid; grid-template-columns: 1fr 44px; }
.counter h3 { grid-column: 1 / 3; padding: 0; }
.counter dl { display: grid; grid-template-columns: 37px auto; grid-auto-rows: 13px; column-gap: 1px; align-items: center; }
.counter dt { text-align: right; }
.config { align-self: end; height: 14px; margin-bottom: 3px; background: #e1e1e1; border: 1px solid #adadad; }

/* status bar */
.status { display: flex; align-items: center; height: 16px; border-top: 1px solid #aab0ba; border-bottom: 1px solid #7d8795; background: linear-gradient(#e4e7ec, #bcc3ce); color: #24385a; }
.status > * { height: 100%; display: flex; align-items: center; }
.msg { flex: 1; padding-left: 1px; }
.pos { width: 64px; justify-content: center; border-left: 1px solid #a8aeb8; color: #222; }
.state { width: 33px; padding-left: 3px; border-left: 1px solid #a8aeb8; }
.xy { width: 92px; justify-content: space-between; padding: 0 3px 0 16px; border: 1px solid #999; background: #d4d8de; color: #111; }
.fine { padding-left: 6px; }
.dim { color: #8d95a3; padding: 0 2px 0 5px; }
.status .move { width: 37px; border: 0; display: block; height: 12px; }
.move select { font: inherit; line-height: 12px; color: #555; }
.model { padding: 0 3px; }
```
FILE: scene.js
```js
// Draws the rulers, the background grid and the pierce points.
const scene = document.getElementById("scene");
const stepX = 4.088, stepY = 4.28, zeroX = 432.5, zeroY = 508.5;
const half = v => Math.floor(v) + 0.5;

function add(name, attrs, text) {
  const el = document.createElementNS("http://www.w3.org/2000/svg", name);
  for (const k in attrs) el.setAttribute(k, attrs[k]);
  if (text !== undefined) el.textContent = text;
  scene.appendChild(el);
}

let gridPath = "", ticks = "";
const numbers = [];
for (let i = -99; i <= 37; i++) {
  const x = half(zeroX + i * stepX);
  const len = i % 10 === 0 ? 13 : i % 5 === 0 ? 8 : 4;
  ticks += `M${x} 112v-${len}`;
  if (i % 5 === 0) gridPath += `M${x} 113V512`;
  if (i % 10 === 0) numbers.push({ x: x + 1, y: 106, t: i });
}
for (let j = 0; j <= 93; j++) {
  const y = half(zeroY - j * stepY);
  const len = j % 10 === 0 ? 12 : j % 5 === 0 ? 7 : 4;
  ticks += `M26 ${y}h-${len}`;
  if (j % 5 === 0) gridPath += `M27 ${y}H2000`;
  if (j % 10 === 0) numbers.push({ x: 22, y: y - 1, t: j, turn: true });
}
add("path", { d: gridPath, class: "grid" });
add("path", { d: "M14 98H2000V113H27V2000H14z", class: "ruler" });
add("path", { d: ticks, class: "tick" });
for (const n of numbers) {
  const attrs = { x: n.x, y: n.y, class: "num" };
  if (n.turn) attrs.transform = `rotate(-90 ${n.x} ${n.y})`;
  add("text", attrs, n.t);
}

const spots = [];
for (const y of [184, 236, 287, 338, 390, 441]) spots.push([201, y], [413, y]);
for (const y of [137, 312, 487]) for (const x of [233, 282, 331, 380]) spots.push([x, y]);
for (const p of [[205, 137], [201, 141], [409, 137], [413, 141], [205, 487], [201, 483], [409, 487], [413, 483]]) spots.push(p);
for (const [x, y] of spots) add("rect", { x, y, width: 1.5, height: 1.5, class: "spot" });
```
